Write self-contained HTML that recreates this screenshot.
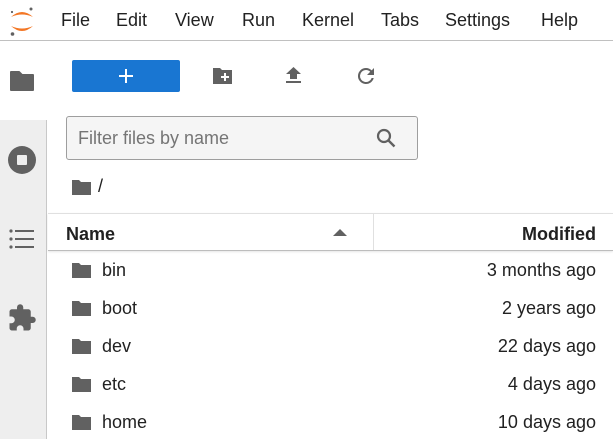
<!DOCTYPE html>
<html><head><meta charset="utf-8"><style>
*{margin:0;padding:0;box-sizing:border-box}
body{width:613px;height:439px;overflow:hidden;background:#fff;font-family:"Liberation Sans",sans-serif;color:#212121;position:relative}
.a{position:absolute}
.menu span{position:absolute;top:10px;font-size:18px;color:#212121}
.side{left:0;top:42px;width:47px;height:397px;background:#eee;border-right:1px solid #c8c8c8}
.row{position:absolute;left:48px;width:565px;height:38px}
.row .n{position:absolute;left:54px;top:8px;font-size:18px}
.row .d{position:absolute;right:17px;top:8px;font-size:18px}
.row svg{position:absolute;left:23px;top:10px}
</style></head><body>
<div class="a" style="left:0;top:0;width:613px;height:41px;border-bottom:1px solid #c0c0c0"></div>
<svg class="a" style="left:9px;top:4px" width="26" height="34" viewBox="0 0 26 34">
<path d="M2 13 Q13 3 24 13 Q13 8 2 13Z" fill="#f37726"/>
<path d="M2 22 Q13 32 24 22 Q13 27 2 22Z" fill="#f37726"/>
<circle cx="22" cy="5" r="1.5" fill="#616161"/><circle cx="3" cy="8" r="1.1" fill="#616161"/><circle cx="3.5" cy="30" r="1.8" fill="#616161"/>
</svg>
<div class="menu">
<span style="left:61px">File</span><span style="left:116px">Edit</span><span style="left:175px">View</span><span style="left:242px">Run</span><span style="left:302px">Kernel</span><span style="left:381px">Tabs</span><span style="left:445px">Settings</span><span style="left:541px">Help</span>
</div>
<div class="a side"></div>
<div class="a" style="left:0;top:42px;width:47px;height:78px;background:#fff"></div>
<svg class="a" style="left:9px;top:70px" width="26" height="22" viewBox="0 0 26 22"><path d="M2 2h8l3 3h11v15H2z" fill="#616161" stroke="#616161" stroke-width="2" stroke-linejoin="round"/></svg>
<svg class="a" style="left:7px;top:145px" width="30" height="30" viewBox="0 0 30 30"><circle cx="15" cy="15" r="14" fill="#616161"/><rect x="10" y="10" width="10" height="10" rx="1" fill="#eee"/></svg>
<svg class="a" style="left:9px;top:229px" width="26" height="20" viewBox="0 0 26 20"><g fill="#616161"><circle cx="2" cy="2" r="1.6"/><circle cx="2" cy="10" r="1.6"/><circle cx="2" cy="18" r="1.6"/><rect x="6" y="1" width="19" height="2"/><rect x="6" y="9" width="19" height="2"/><rect x="6" y="17" width="19" height="2"/></g></svg>
<svg class="a" style="left:7px;top:303px" width="30" height="30" viewBox="0 0 24 24"><path fill="#616161" d="M20.5 11H19V7c0-1.1-.9-2-2-2h-4V3.5a2.5 2.5 0 0 0-5 0V5H4c-1.1 0-2 .9-2 2v3.8h1.5c1.5 0 2.7 1.2 2.7 2.7S5 16.2 3.5 16.2H2V20c0 1.1.9 2 2 2h3.8v-1.5c0-1.5 1.2-2.7 2.7-2.7s2.7 1.2 2.7 2.7V22H17c1.1 0 2-.9 2-2v-4h1.5a2.5 2.5 0 0 0 0-5z"/></svg>
<div class="a" style="left:72px;top:60px;width:108px;height:32px;background:#1976d2;border-radius:2px"></div>
<svg class="a" style="left:119px;top:69px" width="14" height="14" viewBox="0 0 14 14"><path d="M7 0v14M0 7h14" stroke="#fff" stroke-width="2"/></svg>
<svg class="a" style="left:212px;top:67px" width="21" height="18" viewBox="0 0 21 18"><path d="M1 1h7l2 2h10v14H1z" fill="#616161"/><path d="M13 6v8M9 10h8" stroke="#fff" stroke-width="2"/></svg>
<svg class="a" style="left:286px;top:67px" width="15" height="17" viewBox="0 0 15 17"><path d="M4 12V7H0l7.5-7L15 7h-4v5zM0 14h15v2H0z" fill="#616161"/></svg>
<svg class="a" style="left:354px;top:64px" width="24" height="24" viewBox="0 0 24 24"><path fill="#616161" d="M17.65 6.35A7.96 7.96 0 0 0 12 4a8 8 0 1 0 7.73 10h-2.08A6 6 0 1 1 12 6c1.66 0 3.14.69 4.22 1.78L13 11h7V4z"/></svg>
<div class="a" style="left:66px;top:116px;width:352px;height:44px;background:#f5f5f5;border:1px solid #9e9e9e;border-radius:3px"></div>
<div class="a" style="left:78px;top:128px;font-size:18px;color:#757575">Filter files by name</div>
<svg class="a" style="left:376px;top:128px" width="20" height="20" viewBox="0 0 20 20"><circle cx="8" cy="8" r="6" fill="none" stroke="#616161" stroke-width="2.2"/><path d="M12.5 12.5l6 6" stroke="#616161" stroke-width="2.4"/></svg>
<svg class="a" style="left:71px;top:179px" width="21" height="17" viewBox="0 0 21 17"><path d="M1 1h7l2 2h10v13H1z" fill="#616161"/></svg>
<div class="a" style="left:98px;top:176px;font-size:18px">/</div>
<div class="a" style="left:48px;top:213px;width:565px;height:38px;border-top:1px solid #e0e0e0;border-bottom:1px solid #bdbdbd;box-shadow:0 1px 2px rgba(0,0,0,.1)"></div>
<div class="a" style="left:373px;top:214px;width:1px;height:36px;background:#e0e0e0"></div>
<div class="a" style="left:66px;top:224px;font-size:18px;font-weight:bold;color:#212121">Name</div>
<svg class="a" style="left:333px;top:229px" width="14" height="7" viewBox="0 0 14 7"><path d="M0 7L7 0l7 7z" fill="#616161"/></svg>
<div class="a" style="right:17px;top:224px;font-size:18px;font-weight:bold">Modified</div>
<div class="row" style="top:252px"><svg width="21" height="17" viewBox="0 0 21 17"><path d="M1 1h7l2 2h10v13H1z" fill="#616161"/></svg><span class="n">bin</span><span class="d">3 months ago</span></div>
<div class="row" style="top:290px"><svg width="21" height="17" viewBox="0 0 21 17"><path d="M1 1h7l2 2h10v13H1z" fill="#616161"/></svg><span class="n">boot</span><span class="d">2 years ago</span></div>
<div class="row" style="top:328px"><svg width="21" height="17" viewBox="0 0 21 17"><path d="M1 1h7l2 2h10v13H1z" fill="#616161"/></svg><span class="n">dev</span><span class="d">22 days ago</span></div>
<div class="row" style="top:366px"><svg width="21" height="17" viewBox="0 0 21 17"><path d="M1 1h7l2 2h10v13H1z" fill="#616161"/></svg><span class="n">etc</span><span class="d">4 days ago</span></div>
<div class="row" style="top:404px"><svg width="21" height="17" viewBox="0 0 21 17"><path d="M1 1h7l2 2h10v13H1z" fill="#616161"/></svg><span class="n">home</span><span class="d">10 days ago</span></div>
</body></html>
